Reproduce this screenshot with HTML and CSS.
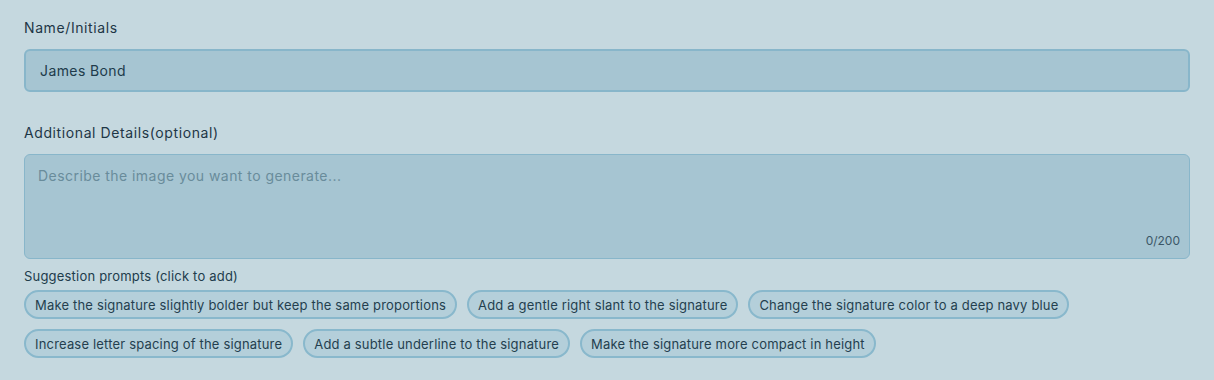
FILE: index.html
```html
<!DOCTYPE html>
<html>
<head>
<meta charset="utf-8">
<link rel="stylesheet" href="styles.css">
</head>
<body>
<div class="form">
  <label class="label">Name/Initials</label>
  <div class="input">James Bond</div>
  <label class="label label-2">Additional Details(optional)</label>
  <div class="textarea">
    <span class="placeholder">Describe the image you want to generate...</span>
    <span class="counter">0/200</span>
  </div>
  <div class="hint">Suggestion prompts (click to add)</div>
  <div class="chips">
    <span class="chip">Make the signature slightly bolder but keep the same proportions</span>
    <span class="chip">Add a gentle right slant to the signature</span>
    <span class="chip">Change the signature color to a deep navy blue</span>
    <span class="chip">Increase letter spacing of the signature</span>
    <span class="chip">Add a subtle underline to the signature</span>
    <span class="chip">Make the signature more compact in height</span>
  </div>
</div>
</body>
</html>
```

FILE: styles.css
```css
html, body {
  margin: 0;
  padding: 0;
  background: #c5d8df;
}
body {
  font-family: Inter, "Noto Sans", sans-serif;
  color: #1f3a4a;
}
.form {
  display: flex;
  flex-direction: column;
  padding: 18px 24px 0 24px;
}
.label {
  display: block;
  font-size: 14px;
  line-height: 20px;
  letter-spacing: 0.6px;
  margin-bottom: 11px;
  color: #1e3646;
}
.label-2 {
  margin-top: 31px;
}
.input {
  box-sizing: border-box;
  height: 43px;
  border: 2px solid #88b6ca;
  border-radius: 6px;
  background: #a6c5d2;
  padding: 0 14px;
  display: flex;
  align-items: center;
  font-size: 14px;
  letter-spacing: 0.4px;
  color: #203b4b;
}
.textarea {
  position: relative;
  box-sizing: border-box;
  height: 105px;
  border: 1px solid #88b6ca;
  border-radius: 6px;
  background: #a6c5d2;
  padding: 11px 13px;
  font-size: 14px;
  line-height: 20px;
  letter-spacing: 0.45px;
}
.placeholder {
  color: #698c9b;
}
.counter {
  position: absolute;
  right: 9px;
  bottom: 9px;
  font-size: 12px;
  line-height: 16px;
  letter-spacing: 0;
  color: #3b5767;
}
.hint {
  margin-top: 9px;
  font-size: 13px;
  line-height: 16px;
  letter-spacing: 0.2px;
  color: #213c4c;
}
.chips {
  display: flex;
  flex-wrap: wrap;
  gap: 10px;
  margin-top: 6px;
}
.chip {
  box-sizing: border-box;
  height: 29px;
  display: inline-flex;
  align-items: center;
  padding: 0 9px;
  border: 2px solid #89b8cc;
  border-radius: 15px;
  background: #b4cfda;
  font-size: 13px;
  letter-spacing: 0.18px;
  color: #243f4f;
  white-space: nowrap;
}
```
